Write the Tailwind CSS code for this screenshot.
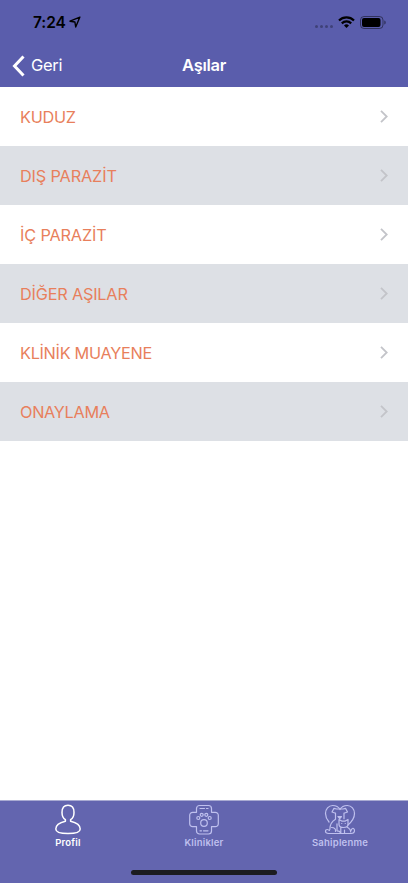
<!DOCTYPE html>
<html lang="tr">
<head>
    <meta charset="UTF-8">
    <meta name="viewport" content="width=device-width, initial-scale=1.0">
    <title>Aşılar</title>
    <script src="https://cdn.jsdelivr.net/npm/@tailwindcss/browser@4"></script>
</head>
<body class="flex flex-col h-[883px] bg-white font-['Inter',sans-serif] overflow-hidden">
<!-- Header -->
<header class="h-[87px] shrink-0 bg-[#5a5dac]">
    <div class="h-11 flex items-center justify-between pl-[33px] pr-[22px] text-black">
        <div class="flex items-center gap-[3px]">
            <span class="pt-px text-[15.5px] font-semibold tracking-[-0.1px]">7:24</span>
            <svg class="w-[12px] h-[12px]" viewBox="0 0 12 12" fill="none" stroke="currentColor" stroke-width="1.4" stroke-linejoin="round">
                <path d="M10.9 1.1 1 5.2l4.9.8.8 5z"/>
            </svg>
        </div>
        <div class="flex items-center">
            <div class="flex gap-[2px] mt-[9px] mr-[5px]">
                <span class="size-[3px] rounded-full bg-black/30"></span>
                <span class="size-[3px] rounded-full bg-black/30"></span>
                <span class="size-[3px] rounded-full bg-black/30"></span>
                <span class="size-[3px] rounded-full bg-black/30"></span>
            </div>
            <svg class="w-[17px] h-[12px] mr-[5px]" viewBox="0 0 17 12" fill="none" stroke="currentColor" stroke-width="2.2">
                <path d="M1 4.5a10.6 10.6 0 0 1 15 0"/>
                <path d="M3.8 7.4a6.7 6.7 0 0 1 9.4 0"/>
                <path d="M8.5 12 6 9.5a3.6 3.6 0 0 1 5 0z" fill="currentColor" stroke="none"/>
            </svg>
            <svg class="w-[26px] h-[13px]" viewBox="0 0 26 13">
                <rect x=".5" y=".5" width="22.5" height="12" rx="3.5" fill="none" stroke="#000" stroke-opacity=".45"/>
                <rect x="2" y="2" width="18.5" height="9" rx="2" fill="#000"/>
                <path d="M24.3 4.5v4c.9-.4 1.4-1.1 1.4-2s-.5-1.6-1.4-2z" fill="#000" fill-opacity=".5"/>
            </svg>
        </div>
    </div>
    <div class="h-[43px] grid grid-cols-3 items-center text-[16.5px] tracking-[-0.3px] text-white">
        <a href="#" class="flex items-center gap-[6px] pl-[12px]">
            <svg class="w-[13px] h-[22px]" viewBox="0 0 13 22" fill="none" stroke="currentColor" stroke-width="3">
                <path d="M11.5 1.5 2.5 11l9 9.5"/>
            </svg>
            Geri
        </a>
        <h1 class="text-center font-semibold">Aşılar</h1>
    </div>
</header>

<!-- List -->
<main class="flex-1 text-[16.3px] tracking-[-0.3px] text-[#e87f5c]">
    <a href="#" class="flex items-center justify-between h-[59px] pt-px pl-5 pr-5">
        KUDUZ
        <svg class="w-[8px] h-[13px] mb-px" viewBox="0 0 8 13" fill="none" stroke="#c3c4c9" stroke-width="1.8"><path d="m1 .8 5.700 5.700L1 12.200"/></svg>
    </a>
    <a href="#" class="flex items-center justify-between h-[59px] pt-px pl-5 pr-5 bg-[#dde0e5]">
        <span class="tracking-[-0.15px]">DIŞ PARAZİT</span>
        <svg class="w-[8px] h-[13px] mb-px" viewBox="0 0 8 13" fill="none" stroke="#c3c4c9" stroke-width="1.8"><path d="m1 .8 5.700 5.700L1 12.200"/></svg>
    </a>
    <a href="#" class="flex items-center justify-between h-[59px] pt-px pl-5 pr-5">
        <span class="tracking-[-0.15px]">İÇ PARAZİT</span>
        <svg class="w-[8px] h-[13px] mb-px" viewBox="0 0 8 13" fill="none" stroke="#c3c4c9" stroke-width="1.8"><path d="m1 .8 5.700 5.700L1 12.200"/></svg>
    </a>
    <a href="#" class="flex items-center justify-between h-[59px] pt-px pl-5 pr-5 bg-[#dde0e5]">
        <span class="tracking-[-0.2px]">DİĞER AŞILAR</span>
        <svg class="w-[8px] h-[13px] mb-px" viewBox="0 0 8 13" fill="none" stroke="#c3c4c9" stroke-width="1.8"><path d="m1 .8 5.700 5.700L1 12.200"/></svg>
    </a>
    <a href="#" class="flex items-center justify-between h-[59px] pt-px pl-5 pr-5">
        KLİNİK MUAYENE
        <svg class="w-[8px] h-[13px] mb-px" viewBox="0 0 8 13" fill="none" stroke="#c3c4c9" stroke-width="1.8"><path d="m1 .8 5.700 5.700L1 12.200"/></svg>
    </a>
    <a href="#" class="flex items-center justify-between h-[59px] pt-px pl-5 pr-5 bg-[#dde0e5]">
        ONAYLAMA
        <svg class="w-[8px] h-[13px] mb-px" viewBox="0 0 8 13" fill="none" stroke="#c3c4c9" stroke-width="1.8"><path d="m1 .8 5.700 5.700L1 12.200"/></svg>
    </a>
</main>

<!-- Tab bar -->
<footer class="h-[83px] shrink-0 flex flex-col justify-between bg-[#6365af] border-t border-[#a9abd2]">
    <nav class="grid grid-cols-3 pt-[3px] text-[9.5px] leading-[14px] tracking-[0.22px] font-semibold text-[#bfc0ee]">
        <a href="#" class="flex flex-col items-center text-white">
            <svg class="size-8" viewBox="0 0 32 32" fill="none" stroke="currentColor" stroke-width="1.5" stroke-linejoin="round">
                <path d="M16 1.2c-3.900 0-6 2.900-6 7.200 0 3.200 1.300 6 3.400 7.300v1.500C8.500 18.300 3.800 20.600 3.800 25c0 3 5.400 4.600 12.200 4.600S28.200 28 28.200 25c0-4.400-4.700-6.700-9.600-7.800v-1.500C20.700 14.400 22 11.600 22 8.400c0-4.300-2.100-7.200-6-7.200z"/>
            </svg>
            Profil
        </a>
        <a href="#" class="flex flex-col items-center">
            <svg class="size-8" viewBox="0 0 32 32" fill="none" stroke="currentColor" stroke-width="1.2" stroke-linejoin="round" stroke-linecap="round">
                <path d="M11.5 1.500h9a3 3 0 0 1 3 3v3.800h3.800a3 3 0 0 1 3 3v8.400a3 3 0 0 1-3 3h-3.800v4.300a3 3 0 0 1-3 3h-9a3 3 0 0 1-3-3v-4.300H4.700a3 3 0 0 1-3-3v-8.400a3 3 0 0 1 3-3h3.800V4.500a3 3 0 0 1 3-3z"/>
                <path d="M12 4.500h4.500M18.500 4.500H20M12 26.800h1.500M15.500 26.800H20"/>
                <circle cx="10.300" cy="14" r="1.500"/>
                <circle cx="13.700" cy="10.800" r="1.500"/>
                <circle cx="18.300" cy="10.800" r="1.500"/>
                <circle cx="21.700" cy="14" r="1.500"/>
                <circle cx="16" cy="19" r="3.300"/>
            </svg>
            Klinikler
        </a>
        <a href="#" class="flex flex-col items-center">
            <svg class="size-8" viewBox="0 0 32 32" fill="none" stroke="currentColor" stroke-width="1.2" stroke-linejoin="round" stroke-linecap="round">
                <!-- heart -->
                <path d="M5 18C2.500 15 1.500 12.500 1.500 9.500c0-4.500 3-8 7.200-8 3.500 0 6 1.600 7.300 4 1.300-2.400 3.800-4 7.300-4 4.200 0 7.200 3.500 7.200 8 0 4.500-2.500 8-6.500 11.500"/>
                <!-- dog -->
                <path d="M12.500 5 10 4.300 8 8l3.500 1.200M12.500 5H19l2.500-.7L23.500 8 20 9.200M11.500 9.200v6c-3.500 2-5.700 6-5.700 10.300M20 9.200v5.500M14 12.500h3.500l-1.750 2z"/>
                <path d="M7 29.500H4.500c-2 0-3-1-3-2.300 0-1.200 1-1.700 2-1.700.8 0 1 .8 2 .8M7 29.500h9.500c0-2-1.500-2.700-3.500-2.700v-7M7.500 23.500c3 0 4.500 1.500 4 4"/>
                <!-- cat -->
                <path d="m15 15.500 2.700 1.600h3.600l2.700-1.600v5c0 1.800-2 3-4.500 3s-4.500-1.200-4.500-3zM17.700 19.500h.1M21.200 19.500h.1M16.800 23.300v6.200H27c2.300 0 3.500-1.300 3.500-3 0-1.500-1-2.200-2-2-1.200.2-.7 1.800-1.800 2M23 23c2.200 1.200 3.700 3 3.700 5M20.500 26v3.500"/>
            </svg>
            Sahiplenme
        </a>
    </nav>
    <div class="w-[146px] h-[5px] mx-auto mb-[8px] rounded-full bg-[#1c1c20]"></div>
</footer>
</body>
</html>
